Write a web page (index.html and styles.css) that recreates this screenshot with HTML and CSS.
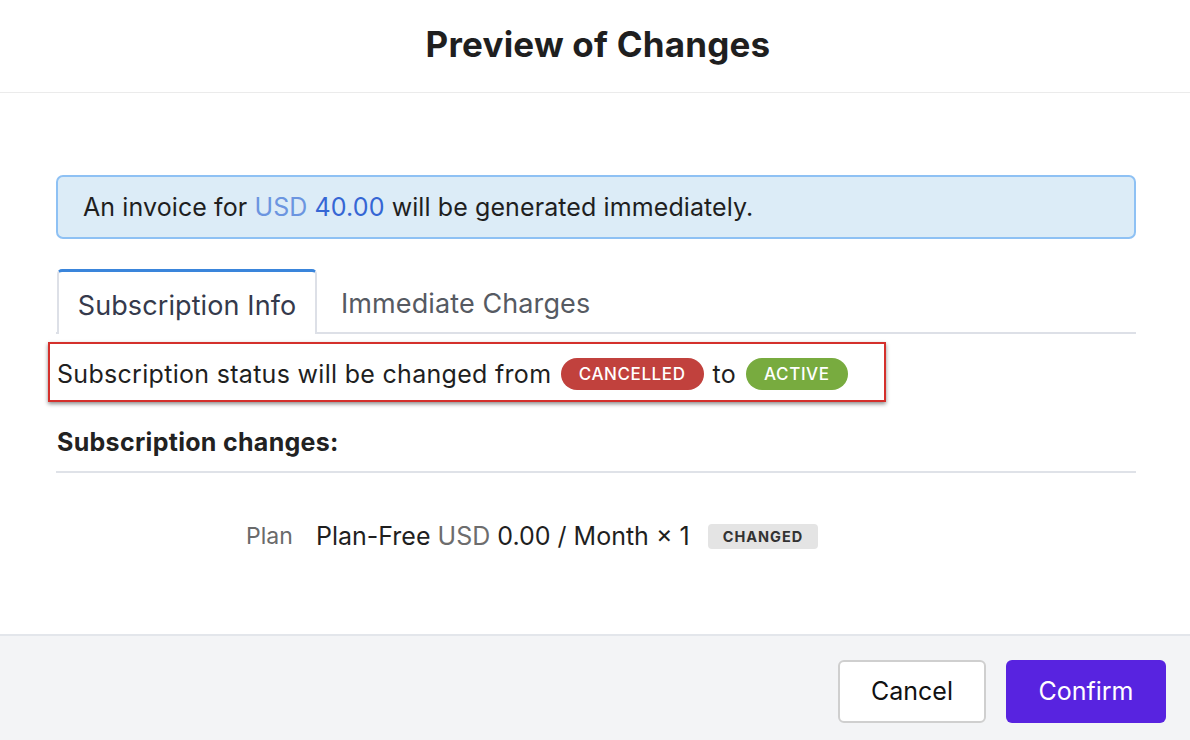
FILE: index.html
```html
<!DOCTYPE html>
<html>
<head>
<meta charset="utf-8">
<link rel="stylesheet" href="styles.css">
</head>
<body>
<div class="modal">
  <header class="modal-header">
    <h1 class="title">Preview of Changes</h1>
  </header>
  <main class="modal-body">
    <div class="alert">An invoice for <span class="amount"><span class="cur">USD</span> 40.00</span> will be generated immediately.</div>
    <div class="tabs">
      <div class="tab active">Subscription Info</div>
      <div class="tab">Immediate Charges</div>
    </div>
    <div class="status-wrap">
      <div class="status">Subscription status will be changed from <span class="pill red">CANCELLED</span><span class="to">to</span><span class="pill green">ACTIVE</span></div>
    </div>
    <h2 class="section">Subscription changes:</h2>
    <div class="plan-row">
      <span class="label">Plan</span>
      <span class="value">Plan-Free <span class="muted">USD</span> 0.00 / Month × 1</span>
      <span class="tag">CHANGED</span>
    </div>
  </main>
  <footer class="modal-footer">
    <button class="btn cancel">Cancel</button>
    <button class="btn confirm">Confirm</button>
  </footer>
</div>
</body>
</html>
```
FILE: styles.css
```css
* { box-sizing: border-box; }
html, body { margin: 0; padding: 0; }
body {
  width: 1190px;
  height: 740px;
  background: #fff;
  font-family: Inter, "Noto Sans", sans-serif;
  color: #222;
  overflow: hidden;
}
.modal { display: flex; flex-direction: column; height: 740px; }
.modal-header {
  height: 93px;
  border-bottom: 1px solid #ebebeb;
  display: flex;
  align-items: center;
  justify-content: center;
}
.title {
  margin: 0;
  font-size: 35px;
  font-weight: 700;
  color: #1f1f1f;
  letter-spacing: 0.2px;
  padding: 0 0 4px 6px;
}
.modal-body {
  flex: 1;
  padding: 82px 54px 0 56px;
}
.alert {
  height: 64px;
  border: 2px solid #8ec1f4;
  background: #dcecf7;
  border-radius: 7px;
  padding: 0 25px;
  display: flex;
  align-items: center;
  font-size: 25px;
  letter-spacing: 0.1px;
  color: #1f1f1f;
  white-space: pre;
}
.amount { color: #3566d4; }
.cur { color: #6b95e0; }
.tabs {
  margin-top: 30px;
  display: flex;
  border-bottom: 2px solid #dde0e7;
  height: 65px;
}
.tab {
  height: 64px;
  display: flex;
  align-items: center;
  font-size: 27px;
  letter-spacing: 0.1px;
  color: #565a62;
  padding: 4px 0 0 24px;
}
.tab.active {
  margin-left: 1px;
  width: 260px;
  justify-content: center;
  color: #353a4c;
  border: 2px solid #dde0e7;
  border-top: 3px solid #3a85db;
  border-bottom: none;
  border-radius: 5px 5px 0 0;
  background: #fff;
  height: 65px;
  margin-bottom: -2px;
  padding: 4px 0 0 0;
}
.status-wrap { margin-left: -8px; margin-top: 8px; }
.status {
  display: inline-flex;
  align-items: center;
  width: 838px;
  height: 60px;
  border: 2px solid #d4302c;
  box-shadow: 0 2px 4px rgba(0,0,0,0.45);
  padding: 3px 0 0 7px;
  font-size: 25px;
  letter-spacing: 0.3px;
  color: #1f1f1f;
  white-space: pre;
}
.to { margin: 0 10px 0 9px; }
.pill {
  display: inline-flex;
  align-items: center;
  height: 32px;
  border-radius: 16px;
  color: #fff;
  font-size: 17px;
  font-weight: 500;
  padding: 0 18px;
  letter-spacing: 0.6px;
}
.red { background: #c1413d; margin-left: 2px; }
.green { background: #78ab3f; }
.section {
  margin: 25px 0 0 0;
  font-size: 25px;
  font-weight: 700;
  letter-spacing: 0.3px;
  color: #222;
  height: 46px;
  border-bottom: 2px solid #dfe2e8;
  width: 1080px;
  padding-left: 1px;
}
.plan-row {
  display: flex;
  align-items: center;
  margin-top: 48px;
  padding-left: 190px;
}
.label { font-size: 23px; color: #6a6a6a; width: 70px; }
.value { font-size: 25px; color: #1f1f1f; }
.muted { color: #6d6d6d; }
.tag {
  margin-left: 18px;
  background: #e4e4e4;
  border-radius: 4px;
  font-size: 14.5px;
  font-weight: 700;
  letter-spacing: 1px;
  color: #333;
  height: 25px;
  padding: 0 15px;
  display: inline-flex;
  align-items: center;
}
.modal-footer {
  height: 106px;
  background: #f3f4f6;
  border-top: 2px solid #e3e6eb;
  display: flex;
  justify-content: flex-end;
  align-items: center;
  gap: 20px;
  padding-right: 24px;
  padding-top: 6px;
}
.btn {
  font-family: Inter, sans-serif;
  font-size: 25px;
  height: 63px;
  border-radius: 6px;
  cursor: pointer;
}
.cancel {
  width: 148px;
  background: #fff;
  border: 2px solid #cfcfcf;
  color: #111;
}
.confirm {
  width: 160px;
  background: #5823e0;
  border: none;
  color: #fff;
}
```
